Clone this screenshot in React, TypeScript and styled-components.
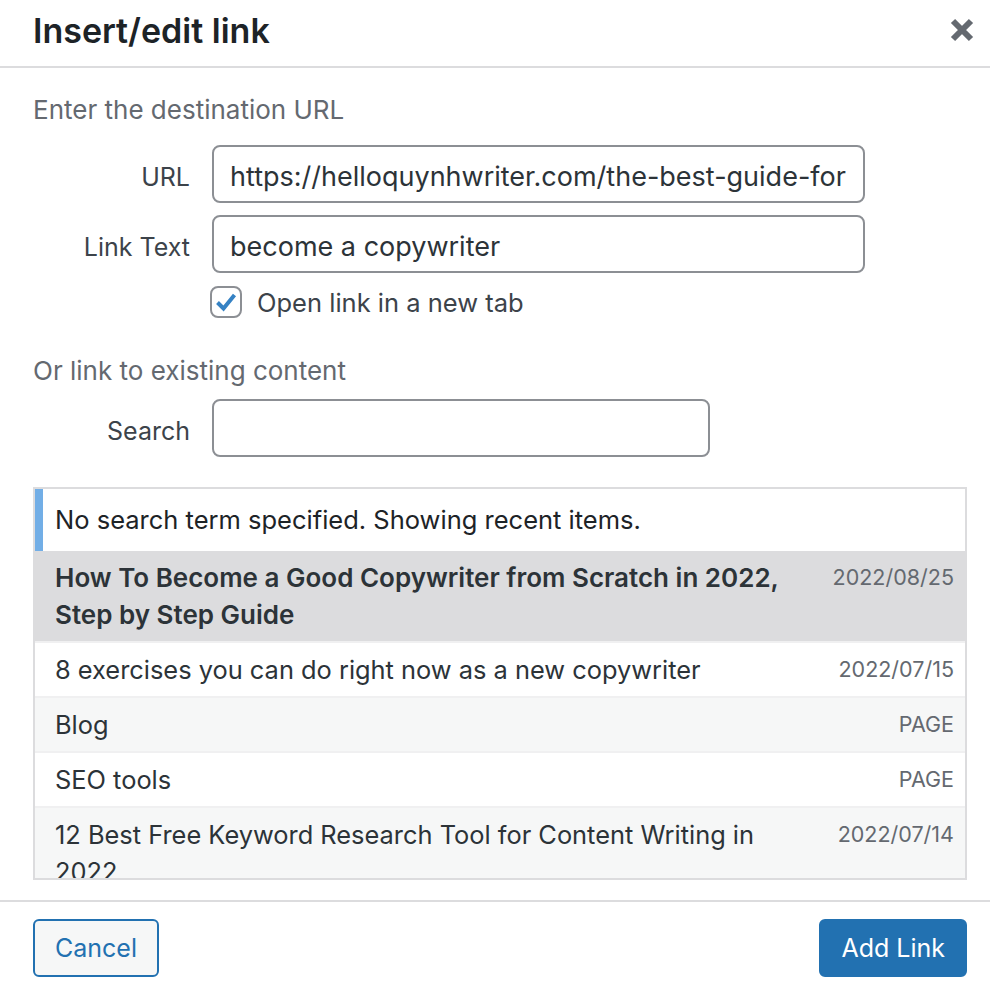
import { createGlobalStyle, styled } from "styled-components";

const GlobalStyle = createGlobalStyle`
  html, body {
    margin: 0;
    padding: 0;
    background: #fff;
  }
  body {
    font-family: Inter, "Liberation Sans", Arial, sans-serif;
    color: #2c3338;
  }
  * {
    box-sizing: border-box;
  }
`;

type Result = {
  title: string;
  info: string;
  selected?: boolean;
};

const results: Result[] = [
  {
    title: "How To Become a Good Copywriter from Scratch in 2022, Step by Step Guide",
    info: "2022/08/25",
    selected: true,
  },
  { title: "8 exercises you can do right now as a new copywriter", info: "2022/07/15" },
  { title: "Blog", info: "Page" },
  { title: "SEO tools", info: "Page" },
  { title: "12 Best Free Keyword Research Tool for Content Writing in 2022", info: "2022/07/14" },
];

export default function App() {
  return (
    <>
      <GlobalStyle />
      <Dialog>
        <Header>
          <Title>Insert/edit link</Title>
          <CloseButton aria-label="Close">
            <svg width="24" height="24" viewBox="0 0 24 24">
              <path
                d="M3 3 L21 21 M21 3 L3 21"
                stroke="#646970"
                strokeWidth="6"
                strokeLinecap="butt"
              />
            </svg>
          </CloseButton>
        </Header>

        <Body>
          <SectionLabel>Enter the destination URL</SectionLabel>
          <FieldRow>
            <FieldLabel htmlFor="url-field">URL</FieldLabel>
            <TextInput
              id="url-field"
              $width={653}
              defaultValue="https://helloquynhwriter.com/the-best-guide-for"
            />
          </FieldRow>
          <FieldRow $gap={12}>
            <FieldLabel htmlFor="link-text-field">Link Text</FieldLabel>
            <TextInput id="link-text-field" $width={653} defaultValue="become a copywriter" />
          </FieldRow>
          <CheckRow>
            <CheckBox>
              <svg width="24" height="24" viewBox="0 0 24 24">
                <path
                  d="M3.5 12.5 L9.5 18.5 L20.5 5"
                  fill="none"
                  stroke="#3582c4"
                  strokeWidth="4"
                  strokeLinejoin="miter"
                />
              </svg>
            </CheckBox>
            <CheckLabel>Open link in a new tab</CheckLabel>
          </CheckRow>

          <SectionLabel $top={34}>Or link to existing content</SectionLabel>
          <FieldRow $gap={10}>
            <FieldLabel htmlFor="search-field">Search</FieldLabel>
            <TextInput id="search-field" $width={498} />
          </FieldRow>

          <ResultsBox>
            <Notice>No search term specified. Showing recent items.</Notice>
            {results.map((r, i) => (
              <ResultItem key={r.title} $selected={r.selected} $alt={i % 2 === 0}>
                <ItemTitle $bold={r.selected}>{r.title}</ItemTitle>
                <ItemInfo>{r.info}</ItemInfo>
              </ResultItem>
            ))}
          </ResultsBox>
        </Body>

        <Footer>
          <SecondaryButton>Cancel</SecondaryButton>
          <PrimaryButton>Add Link</PrimaryButton>
        </Footer>
      </Dialog>
    </>
  );
}

const Dialog = styled.div`
  width: 990px;
  height: 990px;
  display: flex;
  flex-direction: column;
  background: #fff;
  overflow: hidden;
`;

const Header = styled.div`
  height: 68px;
  flex: 0 0 68px;
  display: flex;
  align-items: center;
  justify-content: space-between;
  padding: 0 13px 6px 33px;
  border-bottom: 2px solid #dcdcde;
`;

const Title = styled.h1`
  margin: 0;
  font-size: 34px;
  font-weight: 600;
  color: #1d2327;
`;

const CloseButton = styled.button`
  width: 30px;
  height: 30px;
  padding: 0;
  border: 0;
  background: transparent;
  display: flex;
  align-items: center;
  justify-content: center;
  cursor: pointer;
`;

const Body = styled.div`
  flex: 1;
  padding: 23px 23px 0 33px;
  display: flex;
  flex-direction: column;
`;

const SectionLabel = styled.div<{ $top?: number }>`
  margin-top: ${(p) => p.$top ?? 0}px;
  font-size: 26px;
  line-height: 37px;
  color: #646970;
`;

const FieldRow = styled.div<{ $gap?: number }>`
  display: flex;
  align-items: center;
  gap: 22px;
  margin-top: ${(p) => p.$gap ?? 17}px;
`;

const FieldLabel = styled.label`
  width: 157px;
  padding-top: 6px;
  text-align: right;
  font-size: 25px;
  color: #3c434a;
`;

const TextInput = styled.input<{ $width: number }>`
  width: ${(p) => p.$width}px;
  height: 58px;
  padding: 5px 16px 0;
  border: 2px solid #8c8f94;
  border-radius: 8px;
  font-family: inherit;
  font-size: 27px;
  color: #2c3338;
  background: #fff;
  outline: none;
`;

const CheckRow = styled.div`
  display: flex;
  align-items: center;
  gap: 15px;
  margin: 13px 0 0 177px;
`;

const CheckBox = styled.span`
  width: 32px;
  height: 32px;
  border: 2px solid #8c8f94;
  border-radius: 8px;
  display: flex;
  align-items: center;
  justify-content: center;
`;

const CheckLabel = styled.span`
  font-size: 25.5px;
  color: #3c434a;
`;

const ResultsBox = styled.ul`
  margin: 30px 0 0;
  padding: 0;
  list-style: none;
  height: 393px;
  border: 2px solid #dcdcde;
  overflow: hidden;
`;

const Notice = styled.li`
  padding: 12px 12px 13px 12px;
  border-left: 8px solid #72aee6;
  font-size: 25.5px;
  line-height: 37px;
  color: #1d2327;
`;

const ResultItem = styled.li<{ $selected?: boolean; $alt?: boolean }>`
  display: flex;
  align-items: flex-start;
  justify-content: space-between;
  padding: 8px 11px 8px 20px;
  border-bottom: 2px solid #f0f0f1;
  background: ${(p) => (p.$selected ? "#dcdcde" : p.$alt ? "#f6f7f7" : "#fff")};
`;

const ItemTitle = styled.span<{ $bold?: boolean }>`
  width: 745px;
  font-size: ${(p) => (p.$bold ? 26 : 25.4)}px;
  line-height: 37px;
  font-weight: ${(p) => (p.$bold ? 600 : 400)};
  color: #2c3338;
`;

const ItemInfo = styled.span`
  font-size: 21.5px;
  line-height: 37px;
  text-transform: uppercase;
  color: #646970;
`;

const Footer = styled.div`
  flex: 0 0 auto;
  display: flex;
  justify-content: space-between;
  align-items: flex-start;
  padding: 17px 23px 13px 33px;
  border-top: 2px solid #dcdcde;
  margin-top: 18px;
`;

const ButtonBase = styled.button`
  height: 58px;
  padding: 0 20px;
  border-radius: 6px;
  font-family: inherit;
  font-size: 25px;
  cursor: pointer;
`;

const SecondaryButton = styled(ButtonBase)`
  border: 2px solid #2271b1;
  background: #f6f7f7;
  color: #2271b1;
`;

const PrimaryButton = styled(ButtonBase)`
  border: 2px solid #2271b1;
  background: #2271b1;
  color: #fff;
`;
